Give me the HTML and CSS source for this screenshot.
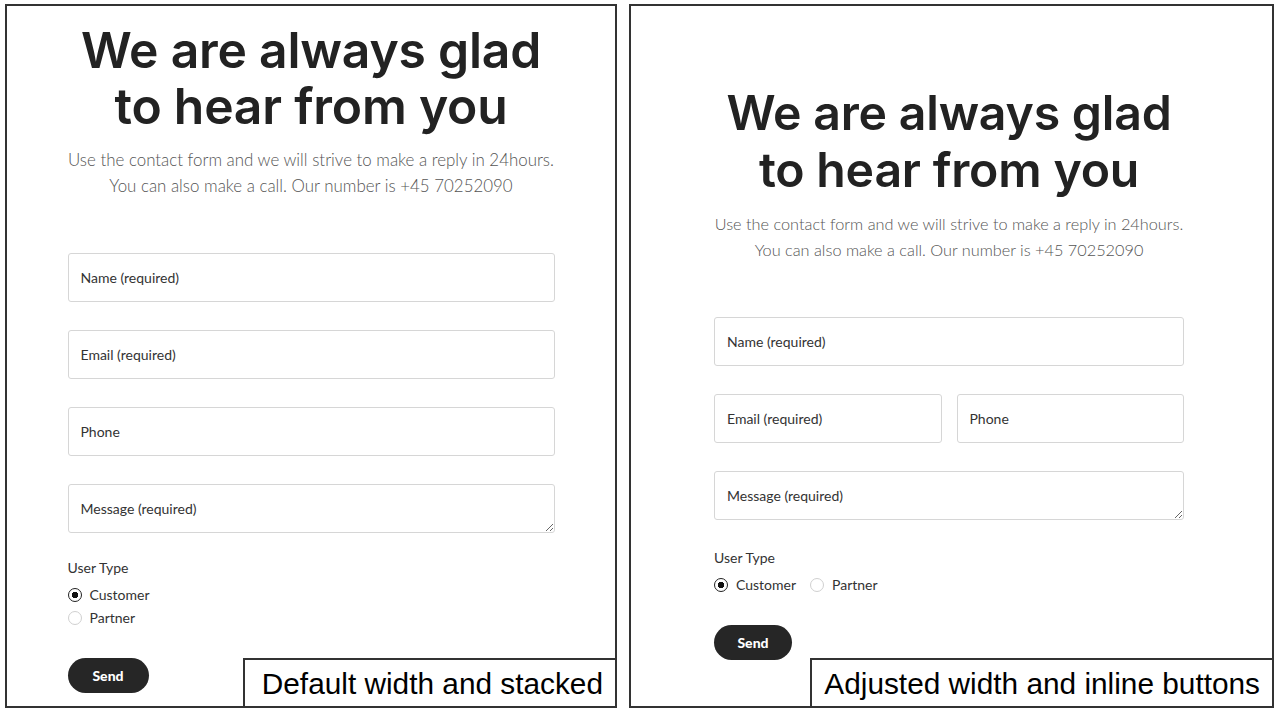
FILE: index.html
```html
<!DOCTYPE html>
<html lang="en">
<head>
  <meta charset="UTF-8" />
  <meta name="viewport" content="width=device-width, initial-scale=1.0"/>
  <title>Contact form layouts</title>
  <link rel="stylesheet" href="styles.css">
</head>
<body>
  <div class="compare">

    <section class="panel panel-stacked">
      <div class="contact">
        <h1>We are always glad<br>to hear from you</h1>
        <p class="lead">Use the contact form and we will strive to make a reply in 24hours.<br>You can also make a call. Our number is +45 70252090</p>

        <form class="contact-form">
          <div class="row">
            <input type="text" placeholder="Name (required)">
          </div>
          <div class="row">
            <input type="email" placeholder="Email (required)">
          </div>
          <div class="row">
            <input type="tel" placeholder="Phone">
          </div>
          <div class="row row-message">
            <textarea placeholder="Message (required)"></textarea>
          </div>

          <div class="user-type">
            <div class="user-type-label">User Type</div>
            <div class="options">
              <label class="option"><input type="radio" name="type-a" checked> Customer</label>
              <label class="option"><input type="radio" name="type-a"> Partner</label>
            </div>
          </div>

          <button type="button" class="send">Send</button>
        </form>
      </div>
      <div class="caption">Default width and stacked</div>
    </section>

    <section class="panel panel-inline">
      <div class="contact">
        <h1>We are always glad<br>to hear from you</h1>
        <p class="lead">Use the contact form and we will strive to make a reply in 24hours.<br>You can also make a call. Our number is +45 70252090</p>

        <form class="contact-form">
          <div class="row">
            <input type="text" placeholder="Name (required)">
          </div>
          <div class="row row-split">
            <input type="email" placeholder="Email (required)">
            <input type="tel" placeholder="Phone">
          </div>
          <div class="row row-message">
            <textarea placeholder="Message (required)"></textarea>
          </div>

          <div class="user-type">
            <div class="user-type-label">User Type</div>
            <div class="options">
              <label class="option"><input type="radio" name="type-b" checked> Customer</label>
              <label class="option"><input type="radio" name="type-b"> Partner</label>
            </div>
          </div>

          <button type="button" class="send">Send</button>
        </form>
      </div>
      <div class="caption">Adjusted width and inline buttons</div>
    </section>

  </div>
</body>
</html>
```

FILE: styles.css
```css
body {
  margin: 0;
  background-color: #fff;
  color: #222;
  font-family: 'Lato', 'Open Sans', sans-serif;
}

.compare {
  display: flex;
  gap: 12px;
  padding: 4px 0 0 5px;
}

.panel {
  position: relative;
  box-sizing: border-box;
  height: 704px;
  border: 2px solid #333;
  background-color: #fff;
}

.panel-stacked {
  width: 612px;
}

.panel-inline {
  width: 645px;
}

.contact {
  margin: 0 auto;
  text-align: center;
}

.panel-stacked .contact {
  width: 487px;
  padding-top: 16px;
}

.panel-inline .contact {
  width: 470px;
  margin-left: 83px;
  padding-top: 78px;
}

h1 {
  font-family: 'Inter', sans-serif;
  font-weight: 600;
  color: #222;
  margin: 0 -30px;
  line-height: 56px;
  letter-spacing: -0.2px;
  white-space: nowrap;
}

.panel-stacked h1 {
  font-size: 49.8px;
}

.panel-inline h1 {
  font-size: 48.2px;
  line-height: 57px;
}

.lead {
  margin: 13px -30px 0;
  font-weight: 300;
  color: #555;
  line-height: 26px;
  white-space: nowrap;
}

.panel-stacked .lead {
  font-size: 16.9px;
}

.panel-inline .lead {
  font-size: 16.3px;
}

.contact-form {
  margin-top: 54px;
  text-align: left;
}

.row {
  display: flex;
  gap: 15px;
  margin-bottom: 28px;
}

.panel-stacked .row-message {
  margin-bottom: 25px;
}

.row input,
.row textarea {
  flex: 1;
  min-width: 0;
  box-sizing: border-box;
  height: 49px;
  padding: 0 12px;
  border: 1px solid #d6d6d6;
  border-radius: 3px;
  font-family: 'Lato', sans-serif;
  font-size: 14px;
  color: #222;
  background-color: #fff;
}

.row textarea {
  padding-top: 15px;
  resize: vertical;
  line-height: 18px;
}

.row input::placeholder,
.row textarea::placeholder {
  color: #333;
}

.user-type {
  font-size: 14px;
  color: #333;
}

.user-type-label {
  line-height: 20px;
  margin-bottom: 5px;
}

.options {
  display: flex;
  flex-direction: column;
}

.panel-inline .options {
  flex-direction: row;
  gap: 14px;
}

.option {
  display: flex;
  align-items: center;
  gap: 8px;
  height: 23px;
}

.option input {
  appearance: none;
  box-sizing: border-box;
  width: 14px;
  height: 14px;
  margin: 0;
  border: 1px solid #d0d0d0;
  border-radius: 50%;
  background-color: #fff;
}

.option input:checked {
  border-color: #222;
  background: radial-gradient(circle, #111 0 3px, #fff 3.5px);
}

.send {
  margin-top: 29px;
  width: 81px;
  height: 35px;
  border: none;
  border-radius: 999px;
  background-color: #262626;
  color: #fff;
  font-family: 'Lato', sans-serif;
  font-weight: 900;
  font-size: 14px;
  cursor: pointer;
}

.panel-inline .send {
  width: 78px;
}

.caption {
  position: absolute;
  right: 0;
  bottom: 0;
  box-sizing: border-box;
  height: 48px;
  padding: 0 12px 0 17px;
  border-top: 2px solid #333;
  border-left: 2px solid #333;
  background-color: #fff;
  font-family: 'Liberation Sans', Arial, sans-serif;
  font-size: 29.8px;
  line-height: 48px;
  color: #000;
  white-space: nowrap;
}

.panel-inline .caption {
  padding: 0 12px 0 12px;
}
```
